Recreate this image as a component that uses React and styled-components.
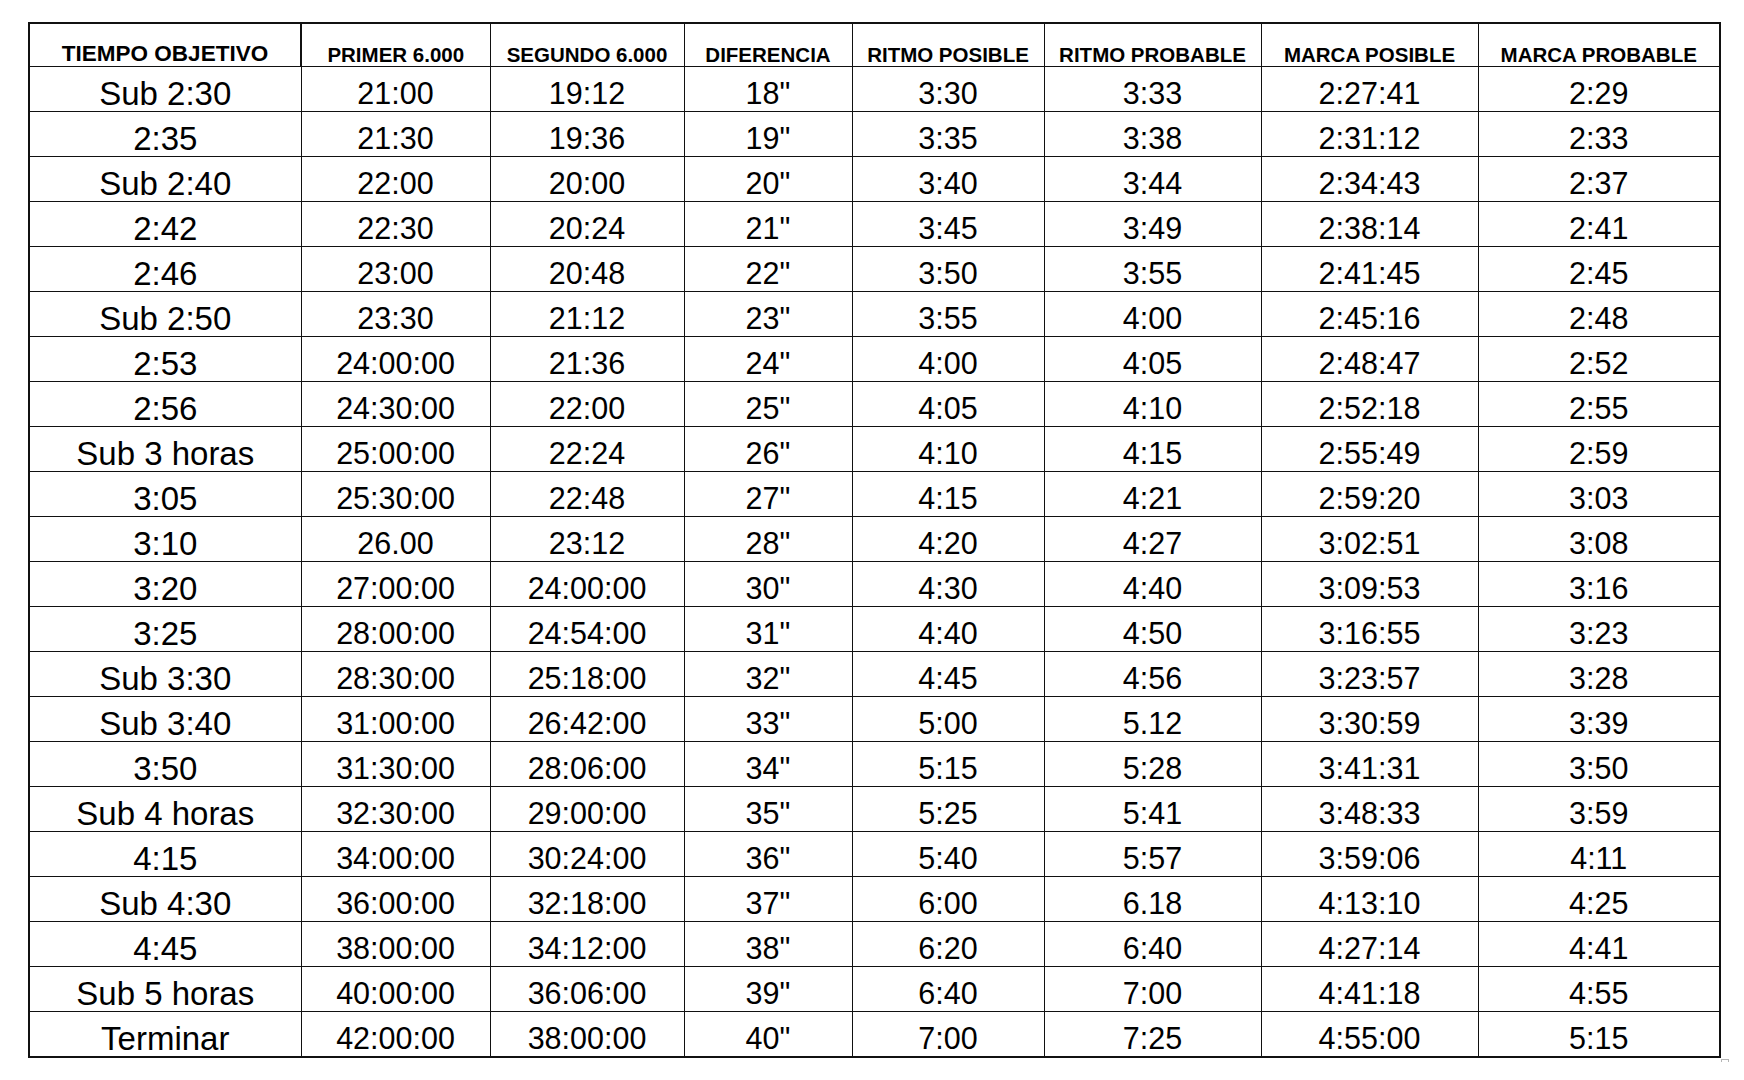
import styled, { createGlobalStyle } from 'styled-components';

const GlobalStyle = createGlobalStyle`
  html, body {
    margin: 0;
    padding: 0;
    background: #ffffff;
  }
  body {
    font-family: "Liberation Sans", Arial, sans-serif;
    color: #000000;
  }
`;

const Page = styled.div`
  padding: 22px 0 0 28px;
`;

const TableWrap = styled.div`
  position: relative;
  display: inline-block;
`;

const Table = styled.table`
  border-collapse: collapse;
  table-layout: fixed;
  width: 1691px;
  border: 2px solid #111111;
`;

const HeadCell = styled.th`
  height: 41px;
  padding: 0 0 1px;
  vertical-align: bottom;
  text-align: center;
  font-size: ${(p) => (p.$first ? '22.5px' : '20.5px')};
  font-weight: bold;
  line-height: 1;
  white-space: nowrap;
  border-bottom: 1.5px solid #111111;
  border-right: ${(p) => (p.$first ? '2.5px' : '1px')} solid #111111;
`;

const Cell = styled.td`
  height: 36px;
  padding: 8px 0 0;
  text-align: center;
  vertical-align: middle;
  font-size: ${(p) => (p.$first ? '33px' : '30.5px')};
  line-height: 1;
  white-space: nowrap;
  border-bottom: 1.5px solid #111111;
  border-right: 1px solid #111111;
`;

const Handle = styled.div`
  position: absolute;
  right: -8px;
  bottom: -9px;
  width: 6px;
  height: 6px;
  border: 1px solid #b5b5b5;
  background: #ffffff;
`;

const widths = [272, 189, 194, 168, 192, 217, 217, 242];

const headers = [
  'TIEMPO OBJETIVO',
  'PRIMER 6.000',
  'SEGUNDO 6.000',
  'DIFERENCIA',
  'RITMO POSIBLE',
  'RITMO PROBABLE',
  'MARCA POSIBLE',
  'MARCA PROBABLE',
];

const rows = [
  ['Sub 2:30', '21:00', '19:12', '18"', '3:30', '3:33', '2:27:41', '2:29'],
  ['2:35', '21:30', '19:36', '19"', '3:35', '3:38', '2:31:12', '2:33'],
  ['Sub 2:40', '22:00', '20:00', '20"', '3:40', '3:44', '2:34:43', '2:37'],
  ['2:42', '22:30', '20:24', '21"', '3:45', '3:49', '2:38:14', '2:41'],
  ['2:46', '23:00', '20:48', '22"', '3:50', '3:55', '2:41:45', '2:45'],
  ['Sub 2:50', '23:30', '21:12', '23"', '3:55', '4:00', '2:45:16', '2:48'],
  ['2:53', '24:00:00', '21:36', '24"', '4:00', '4:05', '2:48:47', '2:52'],
  ['2:56', '24:30:00', '22:00', '25"', '4:05', '4:10', '2:52:18', '2:55'],
  ['Sub 3 horas', '25:00:00', '22:24', '26"', '4:10', '4:15', '2:55:49', '2:59'],
  ['3:05', '25:30:00', '22:48', '27"', '4:15', '4:21', '2:59:20', '3:03'],
  ['3:10', '26.00', '23:12', '28"', '4:20', '4:27', '3:02:51', '3:08'],
  ['3:20', '27:00:00', '24:00:00', '30"', '4:30', '4:40', '3:09:53', '3:16'],
  ['3:25', '28:00:00', '24:54:00', '31"', '4:40', '4:50', '3:16:55', '3:23'],
  ['Sub 3:30', '28:30:00', '25:18:00', '32"', '4:45', '4:56', '3:23:57', '3:28'],
  ['Sub 3:40', '31:00:00', '26:42:00', '33"', '5:00', '5.12', '3:30:59', '3:39'],
  ['3:50', '31:30:00', '28:06:00', '34"', '5:15', '5:28', '3:41:31', '3:50'],
  ['Sub 4 horas', '32:30:00', '29:00:00', '35"', '5:25', '5:41', '3:48:33', '3:59'],
  ['4:15', '34:00:00', '30:24:00', '36"', '5:40', '5:57', '3:59:06', '4:11'],
  ['Sub 4:30', '36:00:00', '32:18:00', '37"', '6:00', '6.18', '4:13:10', '4:25'],
  ['4:45', '38:00:00', '34:12:00', '38"', '6:20', '6:40', '4:27:14', '4:41'],
  ['Sub 5 horas', '40:00:00', '36:06:00', '39"', '6:40', '7:00', '4:41:18', '4:55'],
  ['Terminar', '42:00:00', '38:00:00', '40"', '7:00', '7:25', '4:55:00', '5:15'],
];

const App = () => {
  return (
    <Page>
      <GlobalStyle />
      <TableWrap>
        <Table>
          <colgroup>
            {widths.map((w, i) => (
              <col key={i} style={{ width: w }} />
            ))}
          </colgroup>
          <thead>
            <tr>
              {headers.map((h, i) => (
                <HeadCell key={h} $first={i === 0}>
                  {h}
                </HeadCell>
              ))}
            </tr>
          </thead>
          <tbody>
            {rows.map((row) => (
              <tr key={row[0]}>
                {row.map((v, i) => (
                  <Cell key={i} $first={i === 0}>
                    {v}
                  </Cell>
                ))}
              </tr>
            ))}
          </tbody>
        </Table>
        <Handle />
      </TableWrap>
    </Page>
  );
};

export default App;
